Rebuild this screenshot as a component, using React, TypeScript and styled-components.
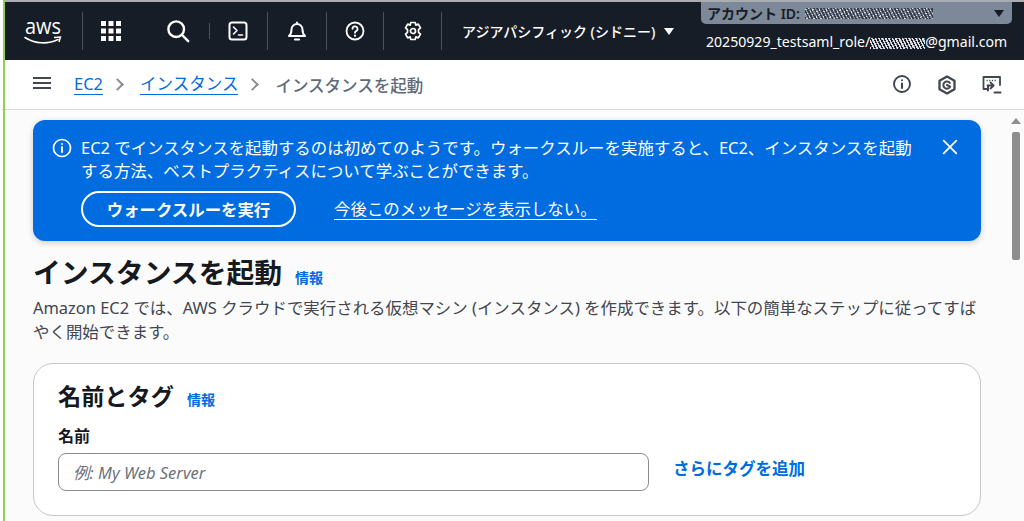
import React from 'react';
import styled, { createGlobalStyle } from 'styled-components';

const GlobalStyle = createGlobalStyle`
  html, body {
    margin: 0;
    padding: 0;
    height: 100%;
    overflow: hidden;
    background: #fff;
  }
  * {
    box-sizing: border-box;
  }
`;

const Stroke = ({ children, size = 20 }: { children: React.ReactNode; size?: number }) => (
  <svg
    width={size}
    height={size}
    viewBox="0 0 20 20"
    fill="none"
    stroke="currentColor"
    strokeWidth="2"
    strokeLinecap="round"
    strokeLinejoin="round"
  >
    {children}
  </svg>
);

const AwsLogo = () => (
  <svg width="42" height="46" viewBox="0 -6 42 46">
    <path
      d="M2 23.500c10 6.500 23 7 33 2"
      fill="none"
      stroke="#fff"
      strokeWidth="1.600"
      strokeLinecap="round"
    />
    <path d="M31 23.500l6.500-.5-1.500 5" fill="none" stroke="#fff" strokeWidth="1.400" />
    <text
      x="2"
      y="20"
      fill="#fff"
      fontSize="22"
      textLength="36"
      lengthAdjust="spacingAndGlyphs"
      fontFamily="'Open Sans', sans-serif"
    >
      aws
    </text>
  </svg>
);

const App = () => (
  <>
    <GlobalStyle />
    <Frame>
      <TopNav>
        <NavCell $width={78}>
          <AwsLogo />
        </NavCell>
        <NavCell $width={58} $noLine $pull={3}>
          <svg width="20" height="20" viewBox="0 0 20 20" fill="#fff">
            {[0, 7.500, 15].map((y) =>
              [0, 7.500, 15].map((x) => <rect key={`${x}-${y}`} x={x} y={y} width="5" height="5" />),
            )}
          </svg>
        </NavCell>
        <NavCell $width={69} $short $shift={5}>
          <Stroke size={24}>
            <circle cx="8.500" cy="8.500" r="6.500" />
            <path d="M13.500 13.500l5 5" />
          </Stroke>
        </NavCell>
        <NavCell $width={58} $pull={2}>
          <Stroke>
            <rect x="1.500" y="1.500" width="17" height="17" rx="2.500" />
            <path d="M5.500 6l3.500 3.500-3.500 3.500M10.500 14h4" strokeWidth="1.600" />
          </Stroke>
        </NavCell>
        <NavCell $width={59} $pull={1}>
          <Stroke>
            <path d="M2 15c1.700-1.500 2.500-3 2.500-6.500a5.500 5.500 0 0 1 11 0c0 3.500.8 5 2.500 6.500z" />
            <path d="M8 18.500h4" strokeWidth="2.200" />
            <path d="M10 1.500v1" />
          </Stroke>
        </NavCell>
        <NavCell $width={57} $pull={2}>
          <Stroke>
            <circle cx="10" cy="10" r="8.500" strokeWidth="1.800" />
            <path d="M7.500 7.800a2.500 2.500 0 1 1 3.600 2.300c-.8.400-1.100.9-1.100 1.700" strokeWidth="1.800" />
            <path d="M10 14.700v.1" strokeWidth="2.200" />
          </Stroke>
        </NavCell>
        <NavCell $width={58}>
          <Stroke>
            <path
              d="M7.800 1.500h4.400l.6 2.600 2.500-1 2.200 3.800-2 1.800v2.600l2 1.800-2.200 3.800-2.500-1-.6 2.600H7.800l-.6-2.600-2.500 1-2.200-3.800 2-1.800V8.700l-2-1.800 2.200-3.800 2.500 1z"
              strokeWidth="1.700"
            />
            <circle cx="10" cy="10" r="2.500" strokeWidth="1.700" />
          </Stroke>
        </NavCell>
        <Region>
          アジアパシフィック (シドニー)
          <Caret />
        </Region>
        <Account>
          <AccountBar>
            <span>アカウント ID:</span>
            <Redacted $width={128} $dark />
            <BarCaret />
          </AccountBar>
          <AccountUser>
            20250929_testsaml_role/
            <Redacted $width={55} />
            @gmail.com
          </AccountUser>
        </Account>
      </TopNav>

      <Breadcrumbs>
        <Hamburger>
          <span />
          <span />
          <span />
        </Hamburger>
        <CrumbLink>EC2</CrumbLink>
        <CrumbChevron />
        <CrumbLink>インスタンス</CrumbLink>
        <CrumbChevron />
        <CrumbCurrent>インスタンスを起動</CrumbCurrent>
        <ToolIcons>
          <Stroke>
            <circle cx="10" cy="9" r="8" strokeWidth="1.900" />
            <path d="M10 8.500v4.500M10 5.200v.1" strokeWidth="2.100" />
          </Stroke>
          <Stroke>
            <path d="M10 1.500l7.500 4.200v8.600L10 18.500l-7.500-4.200V5.700z" strokeWidth="2.300" />
            <path d="M12.900 8a3.600 3.600 0 1 0 .3 3.600L10 10" strokeWidth="2" />
          </Stroke>
          <Stroke>
            <path d="M6 14H1.500V2h16.500v8" strokeWidth="1.800" />
            <path d="M4.500 5.500h10.500" strokeWidth="1.600" strokeDasharray="1.200 1.500" strokeLinecap="butt" />
            <path d="M5.500 10.500h6M8.500 7.500l3.200 3-3.200 3" strokeWidth="1.800" />
            <path d="M6 10.500v5M12.500 17.500h6" strokeWidth="2" />
          </Stroke>
        </ToolIcons>
      </Breadcrumbs>

      <Body>
        <Content>
          <Banner>
            <BannerIcon>
              <Stroke size={20}>
                <circle cx="10" cy="10" r="8.500" strokeWidth="1.700" />
                <path d="M10 9v5M10 6v.1" strokeWidth="2" />
              </Stroke>
            </BannerIcon>
            <BannerMain>
              <BannerText>
                EC2 でインスタンスを起動するのは初めてのようです。ウォークスルーを実施すると、EC2、インスタンスを起動する方法、ベストプラクティスについて学ぶことができます。
              </BannerText>
              <BannerActions>
                <WalkthroughButton>ウォークスルーを実行</WalkthroughButton>
                <DismissLink>今後このメッセージを表示しない。</DismissLink>
              </BannerActions>
            </BannerMain>
            <CloseIcon>
              <Stroke size={18}>
                <path d="M3 3l14 14M17 3L3 17" />
              </Stroke>
            </CloseIcon>
          </Banner>

          <TitleRow>
            <PageTitle>インスタンスを起動</PageTitle>
            <InfoLink>情報</InfoLink>
          </TitleRow>
          <Description>
            Amazon EC2 では、AWS クラウドで実行される仮想マシン (インスタンス) を作成できます。以下の簡単なステップに従ってすばやく開始できます。
          </Description>

          <Card>
            <CardTitleRow>
              <CardTitle>名前とタグ</CardTitle>
              <InfoLink>情報</InfoLink>
            </CardTitleRow>
            <FieldLabel>名前</FieldLabel>
            <FieldRow>
              <NameInput placeholder="例: My Web Server" />
              <AddTag>さらにタグを追加</AddTag>
            </FieldRow>
          </Card>
        </Content>
        <ScrollTrack>
          <ScrollArrow />
          <ScrollThumb />
        </ScrollTrack>
      </Body>
    </Frame>
  </>
);

const sans = `'Noto Sans', 'Noto Sans CJK JP', sans-serif`;

const Frame = styled.div`
  width: 1024px;
  height: 521px;
  overflow: hidden;
  display: flex;
  flex-direction: column;
  border-left: 2px solid #fff;
  font-family: ${sans};
  color: #16191f;
  background: #fbfbfb;
  position: relative;

  &::before {
    content: '';
    position: absolute;
    left: 1px;
    top: 0;
    bottom: 0;
    width: 2px;
    background: #8fd14f;
    z-index: 3;
  }
`;

const TopNav = styled.header`
  flex: none;
  height: 60px;
  margin-left: 1px;
  border-top: 2px solid #a9adb3;
  padding-left: 2px;
  display: flex;
  align-items: stretch;
  background: #161d26;
  color: #fff;
`;

const NavCell = styled.div<{
  $width: number;
  $short?: boolean;
  $noLine?: boolean;
  $shift?: number;
  $pull?: number;
}>`
  flex: none;
  width: ${({ $width }) => $width}px;
  padding-left: ${({ $shift }) => $shift ?? 0}px;
  padding-right: ${({ $pull }) => $pull ?? 0}px;
  display: flex;
  align-items: center;
  justify-content: center;
  position: relative;

  &::after {
    content: '';
    display: ${({ $noLine }) => ($noLine ? 'none' : 'block')};
    position: absolute;
    right: 0;
    width: 1px;
    top: ${({ $short }) => ($short ? 21 : 10)}px;
    bottom: ${({ $short }) => ($short ? 21 : 10)}px;
    background: #4b525c;
  }
`;

const Region = styled.div`
  flex: none;
  width: 259px;
  padding-left: 20px;
  display: flex;
  align-items: center;
  gap: 9px;
  font-size: 14px;
  font-weight: 500;
  white-space: nowrap;
`;

const Caret = styled.span`
  width: 0;
  height: 0;
  border-left: 5px solid transparent;
  border-right: 5px solid transparent;
  border-top: 7px solid #fff;
`;

const Account = styled.div`
  flex: none;
  width: 311px;
  display: flex;
  flex-direction: column;
`;

const AccountBar = styled.div`
  height: 22px;
  padding: 0 6px;
  display: flex;
  align-items: center;
  background: #7d8998;
  color: #161d26;
  border-radius: 0 0 5px 5px;
  font-size: 14px;
  font-weight: 600;
  white-space: nowrap;

  > span:first-child {
    margin-right: 5px;
  }
`;

const BarCaret = styled.span`
  margin-left: auto;
  margin-right: 2px;
  width: 0;
  height: 0;
  border-left: 5px solid transparent;
  border-right: 5px solid transparent;
  border-top: 7px solid #161d26;
`;

const Redacted = styled.span<{ $width: number; $dark?: boolean }>`
  display: inline-block;
  vertical-align: -2px;
  width: ${({ $width }) => $width}px;
  height: 11px;
  background:
    repeating-linear-gradient(
      63deg,
      ${({ $dark }) => ($dark ? '#39404a' : '#dfe1e4')} 0 1.500px,
      transparent 1.500px 3px
    ),
    repeating-linear-gradient(
      -35deg,
      ${({ $dark }) => ($dark ? '#d6d9dd' : '#6d7480')} 0 1px,
      transparent 1px 4px
    );
`;

const AccountUser = styled.div`
  padding: 8px 0 0 5px;
  font-size: 14.100px;
  white-space: nowrap;
`;

const Breadcrumbs = styled.nav`
  flex: none;
  height: 50px;
  padding: 0 22px 0 31px;
  display: flex;
  align-items: center;
  background: #fff;
  border-bottom: 1px solid #d5d7da;
  font-size: 16.500px;
`;

const Hamburger = styled.div`
  width: 18px;
  margin-right: 23px;
  margin-top: -4px;
  display: flex;
  flex-direction: column;
  gap: 3px;

  span {
    height: 2px;
    background: #424650;
  }
`;

const CrumbLink = styled.a`
  color: #006ce0;
  border-bottom: 1px solid #006ce0;
  line-height: 20px;
`;

const CrumbChevron = styled.span`
  width: 9px;
  height: 9px;
  margin: 0 18px 0 10px;
  border-top: 2px solid #8c8c94;
  border-right: 2px solid #8c8c94;
  transform: rotate(45deg);
`;

const CrumbCurrent = styled.span`
  color: #5f6b7a;
  font-weight: 500;
`;

const ToolIcons = styled.div`
  margin-left: auto;
  display: flex;
  gap: 25px;
  color: #424650;
`;

const Body = styled.div`
  flex: 1;
  min-height: 0;
  display: flex;
`;

const Content = styled.main`
  flex: none;
  width: 979px;
  padding: 10px 0 0 31px;
`;

const Banner = styled.section`
  height: 121px;
  padding: 16px 20px 0 19px;
  display: flex;
  background: #006ce0;
  color: #fff;
  border-radius: 12px;
  box-shadow: 0 2px 6px rgba(0, 7, 22, 0.18);
`;

const BannerIcon = styled.div`
  flex: none;
  width: 29px;
  padding-top: 2px;
`;

const BannerMain = styled.div`
  width: 835px;
  flex: none;
`;

const BannerText = styled.p`
  margin: 0;
  font-size: 16.450px;
  line-height: 23px;
`;

const BannerActions = styled.div`
  margin-top: 9px;
  display: flex;
  align-items: center;
  gap: 38px;
`;

const WalkthroughButton = styled.button`
  width: 215px;
  height: 36px;
  padding: 0;
  background: transparent;
  color: #fff;
  border: 2px solid #fff;
  border-radius: 18px;
  font: 700 16.400px ${sans};
`;

const DismissLink = styled.a`
  color: #fff;
  font-size: 16.450px;
  line-height: 21px;
  border-bottom: 1px solid #fff;
`;

const CloseIcon = styled.div`
  flex: none;
  margin-left: 25px;
  padding-top: 2px;
`;

const TitleRow = styled.div`
  margin-top: 12px;
  display: flex;
  align-items: baseline;
  gap: 13px;
`;

const PageTitle = styled.h1`
  margin: 0;
  font-size: 27.800px;
  line-height: 38px;
  font-weight: 700;
`;

const InfoLink = styled.a`
  color: #006ce0;
  font-size: 14px;
  font-weight: 700;
`;

const Description = styled.p`
  margin: 5px 0 0;
  font-size: 16.450px;
  line-height: 24px;
  color: #424650;
`;

const Card = styled.section`
  margin-top: 19px;
  height: 153px;
  padding: 15px 24px 0;
  background: #fff;
  border: 1px solid #c6c6cd;
  border-radius: 20px;
`;

const CardTitleRow = styled.div`
  display: flex;
  align-items: baseline;
  gap: 13px;
`;

const CardTitle = styled.h2`
  margin: 0;
  font-size: 23.200px;
  line-height: 34px;
  font-weight: 700;
`;

const FieldLabel = styled.label`
  display: block;
  margin-top: 11px;
  font-size: 16px;
  line-height: 24px;
  font-weight: 700;
`;

const FieldRow = styled.div`
  margin-top: 5px;
  display: flex;
  align-items: center;
  gap: 24px;
`;

const NameInput = styled.input`
  width: 591px;
  height: 38px;
  padding: 0 14px;
  background: #fff;
  border: 1px solid #8c8c94;
  border-radius: 8px;
  font: italic 16.500px ${sans};
  outline: none;

  &::placeholder {
    color: #6f727b;
    opacity: 1;
  }
`;

const AddTag = styled.a`
  color: #006ce0;
  font-size: 16.500px;
  font-weight: 700;
  margin-top: -8px;
`;

const ScrollTrack = styled.div`
  flex: none;
  width: 10px;
  margin-left: 30px;
  padding-top: 8px;
  display: flex;
  flex-direction: column;
  align-items: center;
`;

const ScrollArrow = styled.span`
  width: 0;
  height: 0;
  border-left: 5px solid transparent;
  border-right: 5px solid transparent;
  border-bottom: 6px solid #8e8e8e;
`;

const ScrollThumb = styled.span`
  width: 8px;
  height: 128px;
  margin-top: 8px;
  background: #8e8e8e;
  border-radius: 2px;
`;

export default App;
